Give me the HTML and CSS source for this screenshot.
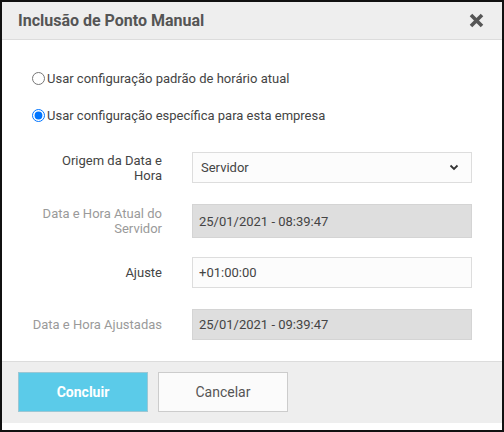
FILE: index.html
```html
<!DOCTYPE html>
<html lang="pt-BR">
<head>
<meta charset="utf-8">
<title>Inclusão de Ponto Manual</title>
<link rel="stylesheet" href="styles.css">
</head>
<body>
<div class="modal">
  <div class="modal-header">
    <h4 class="modal-title">Inclusão de Ponto Manual</h4>
    <button class="close" type="button" aria-label="Fechar">
      <svg width="15" height="15" viewBox="0 0 15 15"><path d="M2 2 L13 13 M13 2 L2 13" stroke="#555" stroke-width="3.6" stroke-linecap="butt"/></svg>
    </button>
  </div>
  <div class="modal-body">
    <label class="radio"><input type="radio" name="cfg"><span>Usar configuração padrão de horário atual</span></label>
    <label class="radio"><input type="radio" name="cfg" checked><span>Usar configuração específica para esta empresa</span></label>
    <div class="form">
      <div class="row">
        <div class="lbl">Origem da Data e<br>Hora</div>
        <div class="field select"><span>Servidor</span>
          <svg width="10" height="7" viewBox="0 0 10 7"><path d="M1.5 1.5 L5 5 L8.5 1.5" fill="none" stroke="#333" stroke-width="1.8"/></svg>
        </div>
      </div>
      <div class="row r2">
        <div class="lbl disabled">Data e Hora Atual do<br>Servidor</div>
        <div class="field ro tall">25/01/2021 - 08:39:47</div>
      </div>
      <div class="row r3">
        <div class="lbl">Ajuste</div>
        <div class="field">+01:00:00</div>
      </div>
      <div class="row">
        <div class="lbl disabled">Data e Hora Ajustadas</div>
        <div class="field ro">25/01/2021 - 09:39:47</div>
      </div>
    </div>
  </div>
  <div class="modal-footer">
    <button class="btn btn-info" type="button">Concluir</button>
    <button class="btn btn-default" type="button">Cancelar</button>
  </div>
</div>
</body>
</html>
```

FILE: styles.css
```css
html, body { margin: 0; padding: 0; background: #000; }
body { font-family: Roboto, "Liberation Sans", sans-serif; }
.modal {
  width: 504px; height: 432px; box-sizing: border-box;
  border: 2px solid #111; background: #fff;
  display: flex; flex-direction: column;
}
.modal-header {
  height: 39px; box-sizing: border-box;
  background: #eeeeee; border-bottom: 1px solid #dcdcdc;
  display: flex; align-items: center; justify-content: space-between;
  padding: 0 18px 0 16px;
}
.modal-title { margin: 0; font-size: 16px; font-weight: 700; color: #555; }
.close { border: 0; background: none; padding: 0; margin: 0; display: flex; }
.modal-body { flex: 1; padding: 29px 0 0 0; }
.radio {
  display: flex; align-items: center; font-size: 13px; color: #444;
  margin: 0 0 18px 30px; height: 19px;
}
.radio input { margin: 0 2px 0 0; width: 13px; height: 13px; }
.form { margin-top: 27px; }
.row { display: flex; align-items: center; margin-bottom: 21px; }
.row.r2 { margin-bottom: 19px; }
.lbl {
  width: 160px; text-align: right; font-size: 13px; line-height: 15px; color: #444;
  margin-right: 30px;
}
.lbl.disabled { color: #9a9a9a; }
.field {
  width: 280px; height: 31px; box-sizing: border-box;
  border: 1px solid #ddd; background: #fcfcfc;
  display: flex; align-items: center; justify-content: space-between;
  padding: 0 12px 0 6px; font-size: 13px; color: #444;
}
.field.select { padding-left: 8px; }
.field.ro { background: #dedede; border-color: #d4d4d4; height: 31px; }
.field.tall { height: 34px; }
.modal-footer {
  height: 62px; box-sizing: border-box; flex: none;
  background: #eeeeee; border-top: 1px solid #dcdcdc;
  padding: 10px 16px 0 16px; display: flex; align-items: flex-start; gap: 10px;
  margin-bottom: 7px;
}
.btn {
  width: 130px; height: 40px; box-sizing: border-box;
  font-family: Roboto, "Liberation Sans", sans-serif; font-size: 14px; cursor: pointer;
}
.btn-info { background: #5bcbe9; border: 1px solid #9cc7d4; color: #fff; font-weight: 700; }
.btn-default { background: #fbfbfb; border: 1px solid #cccccc; color: #555; }
```
